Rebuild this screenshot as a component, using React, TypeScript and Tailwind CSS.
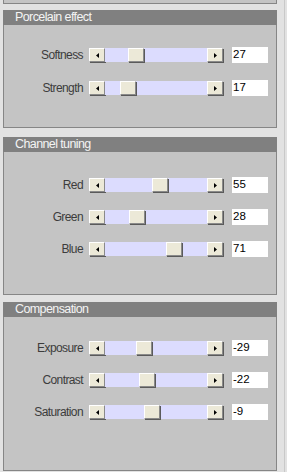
const panels = [
  {
    title: "Porcelain effect",
    min: 0,
    max: 100,
    mt: "mt-[6px]",
    body: "pt-[22px] pb-[31px] gap-[17px]",
    rows: [
      { label: "Softness", value: 27 },
      { label: "Strength", value: 17 },
    ],
  },
  {
    title: "Channel tuning",
    min: 0,
    max: 100,
    mt: "mt-[9px]",
    body: "pt-[25px] pb-[37px] gap-[16px]",
    rows: [
      { label: "Red", value: 55 },
      { label: "Green", value: 28 },
      { label: "Blue", value: 71 },
    ],
  },
  {
    title: "Compensation",
    min: -100,
    max: 100,
    mt: "mt-[7px]",
    body: "pt-[23px] pb-[50px] gap-[16px]",
    rows: [
      { label: "Exposure", value: -29 },
      { label: "Contrast", value: -22 },
      { label: "Saturation", value: -9 },
    ],
  },
];

const bevel =
  "bg-[#ece9d8] border border-t-white border-l-white border-r-[#8a8a8a] border-b-[#8a8a8a] shadow-[1px_1px_0_#5a5a5a]";

const ArrowButton = ({ dir }: { dir: "left" | "right" }) => (
  <div className={`w-[16px] h-[14px] flex items-center justify-center ${bevel}`}>
    <svg width="3" height="5" viewBox="0 0 3 5">
      {dir === "left" ? (
        <path d="M3 0 L0 2.5 L3 5 Z" fill="#000" />
      ) : (
        <path d="M0 0 L3 2.5 L0 5 Z" fill="#000" />
      )}
    </svg>
  </div>
);

const Slider = ({ value, min, max }: { value: number; min: number; max: number }) => {
  const frac = (value - min) / (max - min);
  return (
    <div className="flex h-[14px] w-[134px]">
      <ArrowButton dir="left" />
      <div className="relative flex-1 bg-[#dcdcfe]">
        <div
          className={`absolute top-0 w-[16px] h-[14px] ${bevel}`}
          style={{ left: Math.round(frac * 86) }}
        />
      </div>
      <ArrowButton dir="right" />
    </div>
  );
};

const Panel = ({ panel }: { panel: (typeof panels)[number] }) => (
  <div className={`ml-[3px] w-[274px] ${panel.mt}`}>
    <div className="h-[15px] bg-[#808080] pl-[12px] text-[12.5px] tracking-[-0.6px] leading-[15px] text-[#f4f4f4] font-['Liberation_Sans',sans-serif]">
      {panel.title}
    </div>
    <div className={`flex flex-col bg-[#c4c4c4] border-x border-b border-[#868686] ${panel.body}`}>
      {panel.rows.map((row) => (
        <div key={row.label} className="flex items-center h-[16px]">
          <div className="w-[79px] text-right text-[12px] tracking-[-0.6px] leading-[16px] text-[#3c3c3c] font-['Liberation_Sans',sans-serif]">
            {row.label}
          </div>
          <div className="ml-[6px]">
            <Slider value={row.value} min={panel.min} max={panel.max} />
          </div>
          <div className="ml-[9px] w-[36px] h-[16px] bg-white pl-[1px] text-[11.5px] leading-[15px] text-black font-['Liberation_Sans',sans-serif]">
            {row.value}
          </div>
        </div>
      ))}
    </div>
  </div>
);

export default function App() {
  return (
    <div className="w-[287px] h-[472px] bg-[#e2e2e2] flex overflow-hidden">
      <div className="w-[284px] flex flex-col">
        {/* bottom of the panel above */}
        <div className="ml-[3px] w-[274px] h-[4px] bg-[#c4c4c4] border-x border-b border-[#868686]" />
        {panels.map((p) => (
          <Panel key={p.title} panel={p} />
        ))}
      </div>
      <div className="w-[1px] h-full bg-[#c9c9c9]" />
    </div>
  );
}
